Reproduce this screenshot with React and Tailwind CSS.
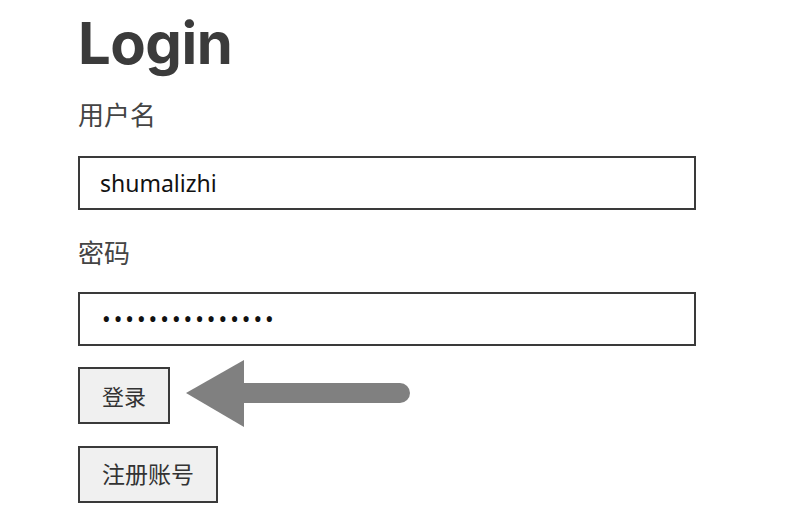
export default function App() {
  return (
    <div
      className="min-h-[520px] w-[800px] bg-white pl-[78px] text-[#3a3a3a]"
      style={{ fontFamily: '"Noto Sans", "Noto Sans CJK SC", sans-serif' }}
    >
      <div className="flex flex-col items-start">
        <h1 className="mt-[13px] font-['Inter',sans-serif] text-[58px] font-bold leading-[60px] tracking-[-0.5px] text-[#3b3b3b]">
          Login
        </h1>
        <label className="mt-[29px] text-[26px] leading-[26px] text-[#444]">用户名</label>
        <input
          type="text"
          readOnly
          value="shumalizhi"
          className="mt-[28px] h-[54px] w-[618px] border-2 border-[#3a3a3a] bg-white px-[20px] text-[23px] text-[#111] outline-none"
        />
        <label className="mt-[30px] text-[26px] leading-[26px] text-[#444]">密码</label>
        <input
          type="password"
          readOnly
          value="shumalizhi12345"
          className="mt-[26px] h-[54px] w-[618px] border-2 border-[#3a3a3a] bg-white px-[22px] text-[23px] tracking-[3px] text-[#111] outline-none"
        />
        <div className="mt-[21px] flex items-start gap-[16px]">
          <button className="h-[57px] border-2 border-[#3a3a3a] bg-[#f0f0f0] px-[22px] text-[22px] leading-none text-[#333]">
            登录
          </button>
          <svg width="224" height="67" viewBox="0 0 224 67" className="-mt-[7px] -mb-[3px]">
            <line x1="50" y1="33" x2="214" y2="33" stroke="#808080" strokeWidth="20" strokeLinecap="round" />
            <polygon points="0,33 58,0 58,67" fill="#808080" />
          </svg>
        </div>
        <button className="mt-[22px] h-[57px] border-2 border-[#3a3a3a] bg-[#f0f0f0] px-[22px] text-[23px] leading-none text-[#333]">
          注册账号
        </button>
      </div>
    </div>
  );
}
